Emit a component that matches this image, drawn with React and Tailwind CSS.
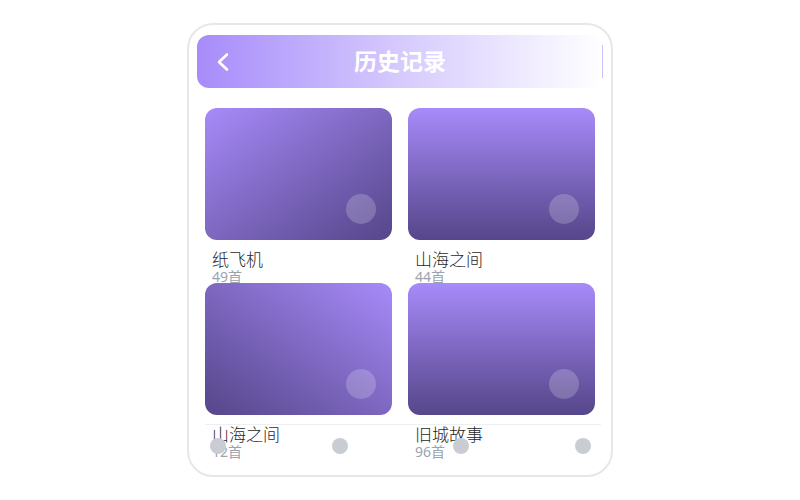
import React from 'react';

const records = [
  { title: '纸飞机', count: 49, bg: 'bg-gradient-to-br' },
  { title: '山海之间', count: 44, bg: 'bg-gradient-to-b' },
  { title: '山海之间', count: 12, bg: 'bg-gradient-to-bl' },
  { title: '旧城故事', count: 96, bg: 'bg-gradient-to-b' },
];

function RecordCard({ item }) {
  return (
    <div className="h-[159px]">
      <div className={`relative h-[132px] rounded-xl ${item.bg} from-[#a78bfa] to-[#56468a]`}>
        <div className="absolute right-4 bottom-4 w-[30px] h-[30px] rounded-full bg-white/20" />
      </div>
      <div className="mt-[10px] px-[7px]">
        <div className="text-[17px] leading-5 font-light text-[#1f1f1f]">{item.title}</div>
        <div className="text-sm leading-4 -mt-[1px] text-[#9ca3af]">{item.count}首</div>
      </div>
    </div>
  );
}

export default function App() {
  return (
    <div
      className="w-[800px] h-[500px] bg-white flex justify-center pt-[23px]"
      style={{ fontFamily: '"Noto Sans", "Noto Sans CJK SC", sans-serif' }}
    >
      <div className="relative w-[426px] h-[454px] rounded-[26px] border-2 border-[#e5e7eb] overflow-hidden">
        <div className="mx-2 mt-[10px] h-[53px] rounded-xl bg-gradient-to-r from-[#a78bfa] via-[#d6cafd] to-white flex items-center relative">
          <svg className="absolute left-[19px]" width="14" height="20" viewBox="0 0 14 20" fill="none">
            <polyline points="11,2.5 3,10 11,17.5" stroke="white" strokeWidth="2.6" strokeLinecap="round" strokeLinejoin="round" />
          </svg>
          <div className="flex-1 text-center text-white text-[23px] font-bold">历史记录</div>
          <div className="absolute right-0 top-[10px] bottom-[10px] w-px bg-[#cdc1fb]" />
        </div>

        <div className="px-4 mt-5 grid grid-cols-2 gap-x-4 gap-y-4">
          {records.map((item, i) => (
            <RecordCard key={i} item={item} />
          ))}
        </div>

        <div className="absolute left-4 right-[10px] bottom-0 h-[51px] border-t border-[#eeeff1] flex justify-between pl-[5px] pr-[10px] pt-[13px]">
          {[0, 1, 2, 3].map((i) => (
            <div key={i} className="w-4 h-4 rounded-full bg-[#c9cdd3]" />
          ))}
        </div>
      </div>
    </div>
  );
}
